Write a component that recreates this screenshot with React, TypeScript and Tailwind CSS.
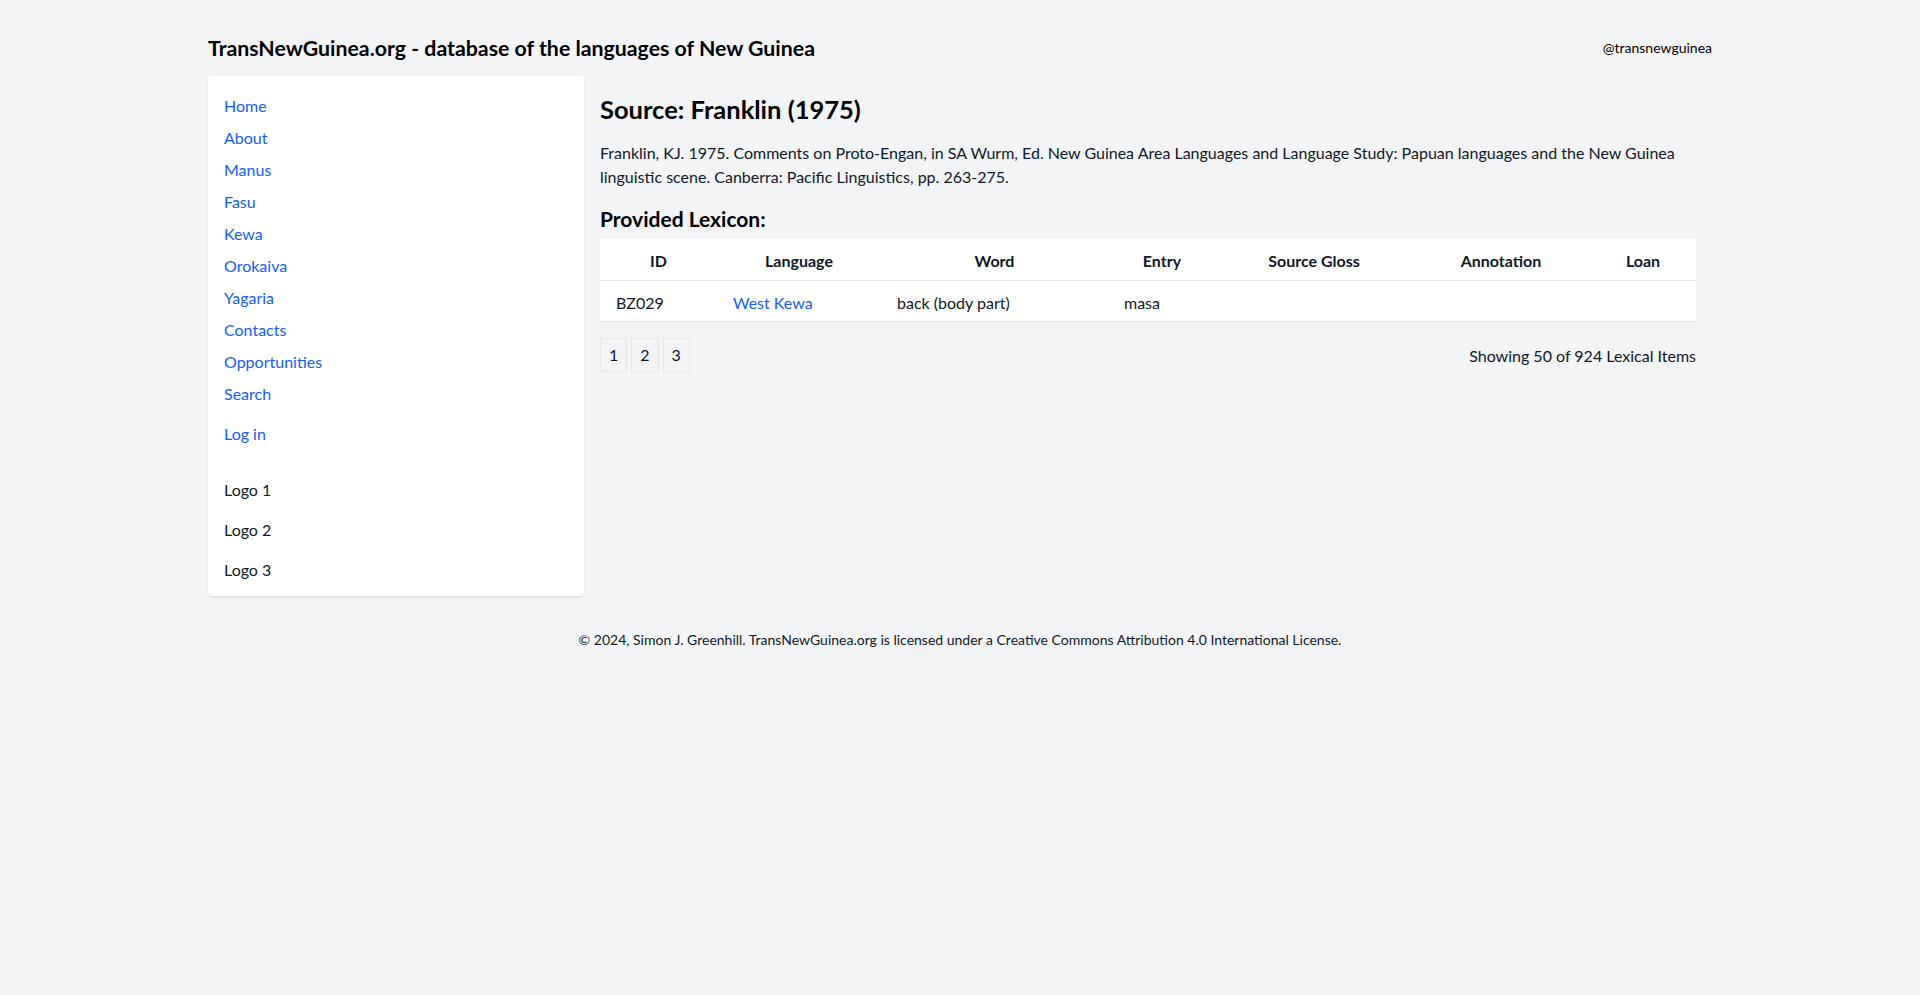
import React from 'react';

const navLinks = [
  'Home',
  'About',
  'Manus',
  'Fasu',
  'Kewa',
  'Orokaiva',
  'Yagaria',
  'Contacts',
  'Opportunities',
  'Search',
];

const columns = [
  { label: 'ID', w: 'w-[117px]' },
  { label: 'Language', w: 'w-[164px]' },
  { label: 'Word', w: 'w-[227px]' },
  { label: 'Entry', w: 'w-[108px]' },
  { label: 'Source Gloss', w: 'w-[196px]' },
  { label: 'Annotation', w: 'w-[178px]' },
  { label: 'Loan', w: 'w-[106px]' },
];

const App = () => {
  return (
    <div className="min-h-screen bg-gray-100 text-gray-900 font-['Segoe_UI','Lato',sans-serif]">
      <div className="max-w-screen-2xl mx-auto px-4">
        {/*header*/}
        <header className="flex items-center justify-between pt-[34px] pb-[14px]">
          <h1 className="text-[21.3px] leading-7 font-bold text-black">
            TransNewGuinea.org - database of the languages of New Guinea
          </h1>
          <a href="#" className="text-sm text-black">
            @transnewguinea
          </a>
        </header>

        <div className="grid grid-cols-4">
          {/*sidebar*/}
          <aside className="col-span-1 self-start bg-white shadow rounded-sm px-4 pt-3.5 pb-1.5">
            <ul>
              {navLinks.map((l) => (
                <li key={l} className="h-8 flex items-center">
                  <a href="#" className="text-blue-600">
                    {l}
                  </a>
                </li>
              ))}
            </ul>
            <div className="h-8 flex items-center mt-2">
              <a href="#" className="text-blue-600">
                Log in
              </a>
            </div>
            <div className="mt-5">
              <div className="h-10 flex items-center">Logo 1</div>
              <div className="h-10 flex items-center">Logo 2</div>
              <div className="h-10 flex items-center">Logo 3</div>
            </div>
          </aside>

          {/*main*/}
          <main className="col-span-3 px-4 pt-[17px]">
            <h2 className="text-[25.5px] leading-8 font-bold text-black">
              Source: Franklin (1975)
            </h2>
            <p className="mt-4 leading-6">
              Franklin, KJ. 1975. Comments on Proto-Engan, in SA Wurm, Ed. New
              Guinea Area Languages and Language Study: Papuan languages and the
              New Guinea linguistic scene. Canberra: Pacific Linguistics, pp.
              263-275.
            </p>
            <h3 className="mt-4 text-[21px] leading-7 font-bold text-black">
              Provided Lexicon:
            </h3>
            <table className="mt-[6px] w-full bg-white table-fixed">
              <thead>
                <tr className="border-b border-gray-200">
                  {columns.map((c) => (
                    <th key={c.label} className={`${c.w} h-[41px] px-4 pt-[4px] font-bold text-center`}>
                      {c.label}
                    </th>
                  ))}
                </tr>
              </thead>
              <tbody>
                <tr className="border-b border-gray-200">
                  <td className="h-[41px] px-4 pt-[4px]">BZ029</td>
                  <td className="px-4 pt-[4px]">
                    <a href="#" className="text-blue-600">
                      West Kewa
                    </a>
                  </td>
                  <td className="px-4 pt-[4px]">back (body part)</td>
                  <td className="px-4 pt-[4px]">masa</td>
                  <td className="px-4"></td>
                  <td className="px-4"></td>
                  <td className="px-4"></td>
                </tr>
              </tbody>
            </table>
            <div className="mt-4 flex items-center justify-between">
              <div className="flex gap-1">
                {['1', '2', '3'].map((n) => (
                  <a key={n} href="#" className="border border-gray-200 px-2 py-1 leading-6">
                    {n}
                  </a>
                ))}
              </div>
              <span className="pt-[3px]">Showing 50 of 924 Lexical Items</span>
            </div>
          </main>
        </div>

        {/*footer*/}
        <footer className="pt-[34px] pb-8 text-center text-sm leading-5">
          © 2024, Simon J. Greenhill. TransNewGuinea.org is licensed under a
          Creative Commons Attribution 4.0 International License.
        </footer>
      </div>
    </div>
  );
};

export default App;
